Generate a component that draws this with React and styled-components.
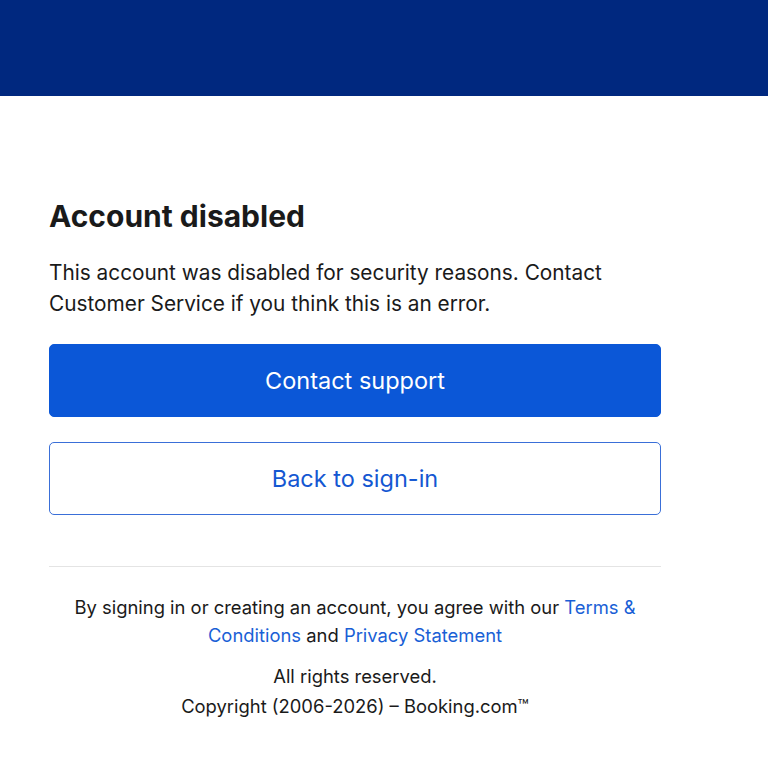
import React from 'react';
import styled, { createGlobalStyle } from 'styled-components';

const GlobalStyle = createGlobalStyle`
  html, body {
    margin: 0;
    padding: 0;
    background: #ffffff;
    font-family: Inter, "Noto Sans", "Liberation Sans", sans-serif;
    color: #1a1a1a;
  }
`;

const Header = styled.header`
  height: 96px;
  background: #00287f;
`;

const Main = styled.main`
  width: 612px;
  padding: 102px 0 40px 49px;
`;

const Title = styled.h1`
  margin: 0 0 23px;
  font-size: 30px;
  line-height: 36px;
  font-weight: 700;
  color: #1a1a1a;
`;

const Message = styled.p`
  margin: 0 0 25px;
  font-size: 20.8px;
  line-height: 31px;
  color: #1a1a1a;
`;

const Actions = styled.div`
  display: flex;
  flex-direction: column;
  gap: 25px;
`;

const Button = styled.button`
  box-sizing: border-box;
  width: 100%;
  height: 73px;
  border-radius: 5px;
  font-family: inherit;
  font-size: 23.5px;
  cursor: pointer;
  border: 1px solid ${({ $primary }) => ($primary ? '#0b57d7' : '#3a6fd8')};
  background: ${({ $primary }) => ($primary ? '#0b57d7' : '#ffffff')};
  color: ${({ $primary }) => ($primary ? '#ffffff' : '#1457d2')};
`;

const Divider = styled.hr`
  margin: 51px 0 26px;
  border: 0;
  border-top: 1px solid #e4e4e4;
`;

const Footer = styled.footer`
  text-align: center;
  font-size: 18.4px;
  line-height: 28px;
  color: #1a1a1a;
`;

const Legal = styled.p`
  margin: 0 0 12px;
`;

const Link = styled.a`
  color: #1a5fd6;
  text-decoration: none;
`;

const Line = styled.div`
  line-height: 30px;
`;

const App = () => (
  <>
    <GlobalStyle />
    <Header />
    <Main>
      <Title>Account disabled</Title>
      <Message>
        This account was disabled for security reasons. Contact Customer Service if you think this is an error.
      </Message>
      <Actions>
        <Button $primary>Contact support</Button>
        <Button>Back to sign-in</Button>
      </Actions>
      <Divider />
      <Footer>
        <Legal>
          By signing in or creating an account, you agree with our <Link href="#">Terms &amp; Conditions</Link> and{' '}
          <Link href="#">Privacy Statement</Link>
        </Legal>
        <Line>All rights reserved.</Line>
        <Line>Copyright (2006-2026) – Booking.com™</Line>
      </Footer>
    </Main>
  </>
);

export default App;
